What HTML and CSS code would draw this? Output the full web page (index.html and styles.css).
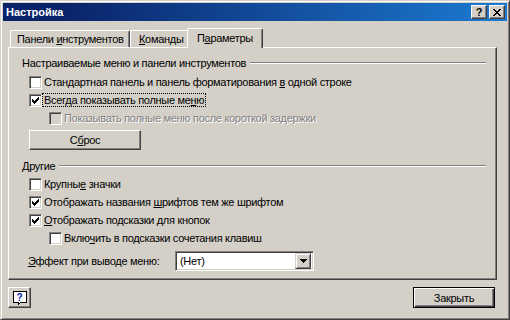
FILE: index.html
```html
<!DOCTYPE html>
<html>
<head>
<meta charset="utf-8">
<link rel="stylesheet" href="styles.css">
</head>
<body>

<div class="window">
  <div class="titlebar">
    <span class="title">Настройка</span>
    <div class="capbtns">
      <span class="capbtn capq">?</span>
      <span class="capbtn">
        <svg width="8" height="7" viewBox="0 0 8 7" shape-rendering="crispEdges"><path d="M0 0h2v1h-2zM6 0h2v1h-2zM1 1h2v1h-2zM5 1h2v1h-2zM2 2h4v1h-4zM3 3h2v1h-2zM2 4h4v1h-4zM1 5h2v1h-2zM5 5h2v1h-2zM0 6h2v1h-2zM6 6h2v1h-2z" fill="#000"/></svg>
      </span>
    </div>
  </div>

  <div class="main">
    <div class="tabs">
      <div class="tab t1">Панели <u>и</u>нструментов</div>
      <div class="tab t2"><u>К</u>оманды</div>
      <div class="tab t3 active">П<u>а</u>раметры</div>
    </div>

    <div class="panel">
      <div class="group">
        <span>Настраиваемые меню и панели инструментов</span>
        <div class="etch"></div>
      </div>
      <div class="row">
        <span class="check"></span>
        <span class="lbl">Стандартная панель и панель форматирования <u>в</u> одной строке</span>
      </div>
      <div class="row">
        <span class="check on"></span>
        <span class="lbl focus">Всегда показывать полные ме<u>н</u>ю</span>
      </div>
      <div class="row sub">
        <span class="check off"></span>
        <span class="lbl gray">Показывать полные меню после короткой задержки</span>
      </div>
      <div class="row btnrow">
        <span class="btn reset">С<u>б</u>рос</span>
      </div>

      <div class="group g2">
        <span>Другие</span>
        <div class="etch"></div>
      </div>
      <div class="row first">
        <span class="check"></span>
        <span class="lbl">Крупны<u>е</u> значки</span>
      </div>
      <div class="row">
        <span class="check on"></span>
        <span class="lbl">Отображать названия <u>ш</u>рифтов тем же шрифтом</span>
      </div>
      <div class="row">
        <span class="check on"></span>
        <span class="lbl"><u>О</u>тображать подсказки для кнопок</span>
      </div>
      <div class="row sub">
        <span class="check"></span>
        <span class="lbl">Вклю<u>ч</u>ить в подсказки сочетания клавиш</span>
      </div>
      <div class="row comborow">
        <span class="combolbl"><u>Э</u>ффект при выводе меню:</span>
        <div class="combo">
          <span class="comboval">(Нет)</span>
          <span class="dropbtn">
            <svg width="7" height="4" viewBox="0 0 7 4" shape-rendering="crispEdges"><path d="M0 0h7v1h-7zM1 1h5v1h-5zM2 2h3v1h-3zM3 3h1v1h-1z" fill="#000"/></svg>
          </span>
        </div>
      </div>
    </div>

    <div class="footer">
      <span class="btn helpbtn">
        <svg width="16" height="16" viewBox="0 0 16 16" shape-rendering="crispEdges">
          <path d="M1 1h13v11h-5l-3 3v-3h-5z" fill="#fff" stroke="#000" stroke-width="1"/>
          <path d="M14 2h1v11h-5v-1h4z" fill="#000"/>
          <text x="7.5" y="10.5" text-anchor="middle" font-family="Liberation Sans, sans-serif" font-weight="bold" font-size="10" fill="#0a24b0">?</text>
        </svg>
      </span>
      <span class="btn closebtn">Закрыть</span>
    </div>
  </div>
</div>

</body>
</html>
```

FILE: styles.css
```css
body {
    margin: 0;
    background-color: #d4d0c8;
    font-family: "Liberation Sans", Arial, sans-serif;
    font-size: 11px;
    letter-spacing: -0.3px;
    color: #000;
}

* {
    box-sizing: border-box;
}

u {
    text-decoration: underline;
    text-underline-offset: 1px;
}

.window {
    width: 510px;
    height: 320px;
    padding: 2px;
    background: #d4d0c8;
    border: 1px solid;
    border-color: #d4d0c8 #404040 #404040 #d4d0c8;
    box-shadow: inset 1px 1px #fff, inset -1px -1px #808080;
}

.titlebar {
    height: 18px;
    display: flex;
    align-items: center;
    justify-content: space-between;
    padding: 0 2px 0 3px;
    background: linear-gradient(to right, #0a246a 12%, #1c7ad2 100%);
}

.title {
    color: #fff;
    font-weight: bold;
    font-size: 11px;
    letter-spacing: 0;
}

.capbtns {
    display: flex;
    gap: 2px;
}

.capbtn {
    width: 16px;
    height: 14px;
    display: flex;
    align-items: center;
    justify-content: center;
    background: #d4d0c8;
    border: 1px solid;
    border-color: #fff #404040 #404040 #fff;
    box-shadow: inset -1px -1px #808080;
}

.capq {
    font-weight: bold;
    font-size: 11px;
    line-height: 12px;
}

.main {
    padding: 7px 5px 0 5px;
    width: 499px;
}

.tabs {
    display: flex;
    align-items: flex-end;
    height: 19px;
    padding-left: 2px;
    position: relative;
    z-index: 1;
}

.tab {
    height: 17px;
    padding: 2px 0 0 6px;
    white-space: nowrap;
    border: 1px solid;
    border-bottom: none;
    border-color: #fff #404040 #fff #fff;
    border-radius: 2px 2px 0 0;
    box-shadow: inset -1px 0 #808080;
    background: #d4d0c8;
}

.t1 {
    width: 120px;
}

.t2 {
    width: 59px;
    padding-left: 8px;
}

.t3 {
    width: 76px;
    padding-left: 9px;
}

.tab.active {
    height: 20px;
    margin-left: -2px;
    margin-bottom: -1px;
    padding-top: 3px;
}

.panel {
    height: 233px;
    padding: 8px 10px 0 13px;
    border: 1px solid;
    border-color: #fff #404040 #404040 #fff;
    box-shadow: inset -1px -1px #808080;
}

.group {
    display: flex;
    align-items: center;
    height: 13px;
    margin-bottom: 4px;
}

.group .etch {
    flex: 1;
    margin-left: 4px;
    border-top: 1px solid #808080;
    border-bottom: 1px solid #fff;
}

.g2 {
    margin-top: 9px;
}

.row {
    display: flex;
    align-items: center;
    height: 18px;
    padding-left: 7px;
}

.row.sub {
    padding-left: 27px;
}

.row.first {
    margin-top: -1px;
}

.check {
    width: 13px;
    height: 13px;
    flex: none;
    background: #fff;
    border: 1px solid;
    border-color: #808080 #fff #fff #808080;
    box-shadow: inset 1px 1px #404040, inset -1px -1px #d4d0c8;
}

.check.off {
    background: #d4d0c8;
}

.check.on {
    background: #fff url("data:image/svg+xml,%3Csvg xmlns='http://www.w3.org/2000/svg' width='7' height='7' shape-rendering='crispEdges'%3E%3Cpath d='M6 0h1v1h-1zM5 1h2v1h-2zM0 2h1v1h-1zM4 2h3v1h-3zM0 3h2v1h-2zM3 3h3v1h-3zM0 4h5v1h-5zM1 5h3v1h-3zM2 6h1v1h-1z' fill='%23000'/%3E%3C/svg%3E") no-repeat 2px 2px;
}

.lbl {
    padding: 0 1px;
    border: 1px dotted transparent;
    line-height: 12px;
}

.lbl.focus {
    border-color: #000;
}

.gray {
    color: #808080;
    text-shadow: 1px 1px #fff;
}

.btn {
    display: flex;
    align-items: center;
    justify-content: center;
    background: #d4d0c8;
    border: 1px solid;
    border-color: #fff #404040 #404040 #fff;
    box-shadow: inset -1px -1px #808080;
}

.btnrow {
    height: 20px;
    margin-top: 3px;
}

.reset {
    width: 112px;
    height: 20px;
}

.comborow {
    height: 20px;
    margin-top: 4px;
    padding-left: 6px;
}

.combolbl {
    width: 147px;
}

.combo {
    width: 139px;
    height: 20px;
    display: flex;
    align-items: center;
    justify-content: space-between;
    padding: 2px;
    background: #fff;
    border: 1px solid;
    border-color: #808080 #fff #fff #808080;
    box-shadow: inset 1px 1px #404040, inset -1px -1px #d4d0c8;
}

.comboval {
    padding-left: 2px;
}

.dropbtn {
    width: 16px;
    height: 16px;
    display: flex;
    align-items: center;
    justify-content: center;
    background: #d4d0c8;
    border: 1px solid;
    border-color: #d4d0c8 #404040 #404040 #d4d0c8;
    box-shadow: inset 1px 1px #fff, inset -1px -1px #808080;
}

.footer {
    display: flex;
    justify-content: space-between;
    margin-top: 7px;
}

.helpbtn {
    width: 23px;
    height: 21px;
}

.closebtn {
    width: 82px;
    height: 21px;
    outline: 1px solid #000;
    outline-offset: -1px;
    border-color: #fff #404040 #404040 #fff;
    box-shadow: inset 1px 1px #fff, inset -1px -1px #404040, inset -2px -2px #808080;
    margin-right: 2px;
}
```
